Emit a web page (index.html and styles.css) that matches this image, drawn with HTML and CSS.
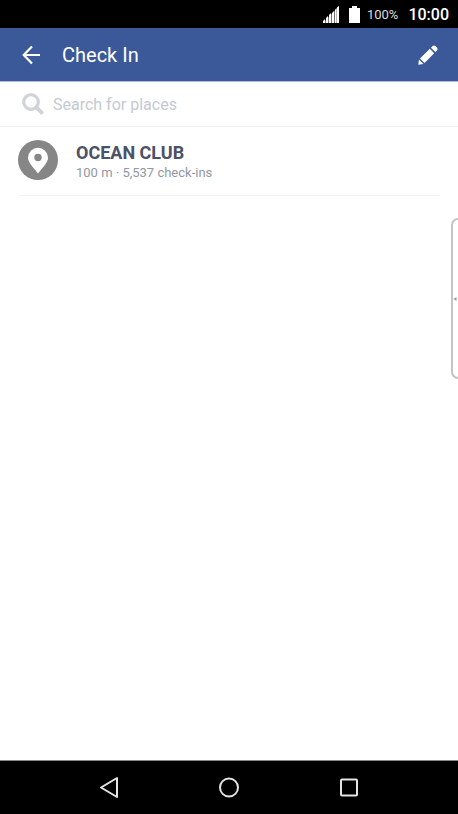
FILE: index.html
```html
<!DOCTYPE html>
<html lang="en">
<head>
<meta charset="utf-8">
<meta name="viewport" content="width=device-width, initial-scale=1">
<title>Check In</title>
<link rel="stylesheet" href="styles.css">
</head>
<body>
<div class="status">
  <svg class="signal" width="16" height="17" viewBox="0 0 16 17" aria-hidden="true">
    <path d="M0 17v-2l2-2v4zM3 17v-5l2-2v7zM6 17V9l2-2v10zM9 17V7l2-2v12zM12 17V4l1.500-2v15zM14 17V1.500L16 0v17z" fill="#fff"/>
    <path d="M0 17L16 0v17z" fill="#fff" opacity=".45"/>
  </svg>
  <svg class="battery" width="11" height="17" viewBox="0 0 11 17" aria-hidden="true">
    <path d="M3 0h5v2h3v15H0V2h3z" fill="#fff"/>
  </svg>
  <span class="percent">100%</span>
  <span class="clock">10:00</span>
</div>
<header class="bar">
  <button class="icon-button" type="button" aria-label="Back">
    <svg width="20" height="20" viewBox="0 0 20 20" fill="none" stroke="#fff" stroke-width="2.200"><path d="M20 10H4M12 1.500L3.700 10l8.300 8.500"/></svg>
  </button>
  <h1 class="title">Check In</h1>
  <button class="icon-button" type="button" aria-label="Edit">
    <svg width="20" height="20" viewBox="0 0 20 20" fill="#fff"><path d="M2 13.500L11.800 3.800l4.400 4.400L6.500 18zM.9 14.500l4.500 4.600L.3 19.800zM13 2.800L14.600 1.100q1.400-1.400 2.800 0l1.500 1.500q1.400 1.400 0 2.800L17.300 7z"/></svg>
  </button>
</header>
<main class="content">
  <label class="search">
    <svg width="24" height="24" viewBox="0 0 24 24" fill="none" stroke="#d0d3d8"><circle cx="10" cy="10" r="7.300" stroke-width="3.200"/><path d="M15.300 15.300l6.400 6.400" stroke-width="3.800"/></svg>
    <input class="search-input" type="text" placeholder="Search for places" aria-label="Search for places">
  </label>
  <ul class="places">
    <li class="place">
      <svg width="40" height="40" viewBox="0 0 40 40" aria-hidden="true"><circle cx="20" cy="20" r="20" fill="#868686"/><path d="M20 33.500C16 27.800 10 22.800 10 17.700a10 10 0 0 1 20 0c0 5.100-6 10.100-10 15.800z" fill="#fff"/><circle cx="20" cy="17.500" r="3.700" fill="#868686"/></svg>
      <div class="place-text">
        <h2 class="name">OCEAN CLUB</h2>
        <p class="meta">100 m · 5,537 check-ins</p>
      </div>
    </li>
  </ul>
  <div class="edge-tab">
    <svg width="5" height="6" viewBox="0 0 5 6" aria-hidden="true"><path d="M3.500 1v4L.5 3z" fill="#999"/></svg>
  </div>
</main>
<nav class="nav">
  <button class="icon-button" type="button" aria-label="Back">
    <svg width="24" height="24" viewBox="0 0 24 24" fill="none" stroke="#e4e4e4" stroke-width="2" stroke-linejoin="round"><path d="M20 2v19L4 11.500z"/></svg>
  </button>
  <button class="icon-button" type="button" aria-label="Home">
    <svg width="24" height="24" viewBox="0 0 24 24" fill="none" stroke="#e4e4e4" stroke-width="2"><circle cx="12" cy="11.500" r="9"/></svg>
  </button>
  <button class="icon-button" type="button" aria-label="Recent apps">
    <svg width="24" height="24" viewBox="0 0 24 24" fill="none" stroke="#e4e4e4" stroke-width="2"><rect x="4" y="3.500" width="16" height="16" rx="1"/></svg>
  </button>
</nav>
</body>
</html>
```
FILE: styles.css
```css
* {
  box-sizing: border-box;
}

body {
  margin: 0;
  min-height: 100vh;
  display: flex;
  flex-direction: column;
  background: #fff;
  font-family: Roboto, "Liberation Sans", sans-serif;
}

h1, h2, p, ul {
  margin: 0;
  padding: 0;
}

svg {
  display: block;
  flex: none;
}

.status {
  display: flex;
  align-items: center;
  justify-content: flex-end;
  height: 28px;
  padding: 0 9px;
  background: #000;
  color: #fff;
}

.battery {
  margin-left: 10px;
}

.percent {
  margin-left: 7px;
  color: #ddd;
  font-size: 13px;
}

.clock {
  margin-left: 10px;
  font-size: 16px;
  font-weight: 500;
}

.icon-button {
  display: flex;
  padding: 0;
  border: 0;
  background: none;
}

.bar {
  display: flex;
  align-items: center;
  height: 54px;
  padding: 0 20px;
  background: #3b5998;
  border-bottom: 1px solid #b0bbd6;
}

.title {
  flex: 1;
  margin-left: 22px;
  color: #fff;
  font-size: 20px;
  font-weight: 400;
}

.content {
  position: relative;
  flex: 1;
}

.search {
  display: flex;
  align-items: center;
  gap: 8px;
  height: 45px;
  padding: 0 21px;
  border-bottom: 1px solid #f1f1f1;
}

.search-input {
  flex: 1;
  min-width: 0;
  padding: 0;
  border: 0;
  outline: 0;
  background: none;
  color: #4b5166;
  font: 16px Roboto, "Liberation Sans", sans-serif;
}

.search-input::placeholder {
  color: #c5c9d1;
}

.places {
  margin: 0 18px;
  list-style: none;
}

.place {
  display: flex;
  align-items: center;
  gap: 18px;
  height: 69px;
  padding-bottom: 2px;
  border-bottom: 1px solid #f3f3f3;
}

.place-text {
  padding-top: 4px;
}

.name {
  color: #4b5166;
  font-size: 18px;
  font-weight: 700;
  line-height: 22px;
}

.meta {
  color: #9197a3;
  font-size: 13px;
  line-height: 18px;
}

.edge-tab {
  position: absolute;
  top: 136px;
  right: 0;
  display: flex;
  align-items: center;
  justify-content: flex-end;
  width: 7px;
  height: 161px;
  border: 2px solid #c4c4c4;
  border-right: 0;
  border-radius: 7px 0 0 7px;
}

.nav {
  display: flex;
  align-items: center;
  justify-content: center;
  gap: 96px;
  height: 54px;
  background: #000;
  border-top: 1px solid #888;
}
```
